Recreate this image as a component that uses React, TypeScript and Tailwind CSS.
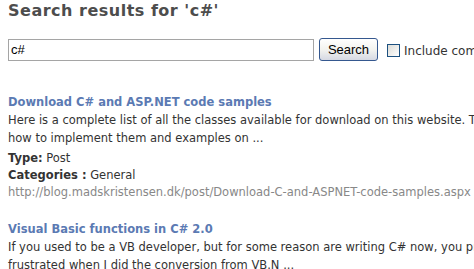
import React from "react";

const font = { fontFamily: '"DejaVu Sans", Verdana, sans-serif' };

export default function App() {
  return (
    <div className="bg-white w-[474px] h-[269px] overflow-hidden px-2 text-[#333]" style={font}>
      <h1 className="text-[16px] font-bold text-[#4d4d4d] leading-[20px] pt-[1px] tracking-[0.5px] whitespace-nowrap">
        Search results for 'c#'
      </h1>
      <div className="flex items-center mt-[17px] whitespace-nowrap">
        <div className="shrink-0 w-[306px] h-[22px] border border-[#a5a5a5] flex items-center px-[2px] text-[13px] text-black font-['Liberation_Sans',Arial,sans-serif]">
          c#
        </div>
        <button className="shrink-0 ml-[5px] w-[59px] h-[23px] rounded-[3px] border border-[#35588f] bg-gradient-to-b from-[#ffffff] via-[#f3f3ef] to-[#d6d9e3] text-[13px] text-black font-['Liberation_Sans',Arial,sans-serif] leading-none flex items-center justify-center">
          Search
        </button>
        <span className="shrink-0 ml-[9px] w-[13px] h-[13px] border border-[#1c5180] bg-gradient-to-br from-[#dcdcd7] to-[#ffffff] mt-[2px]" />
        <span className="shrink-0 ml-[4px] text-[12px] mt-[2px] text-[#333]">Include comments</span>
      </div>

      <div className="mt-[32px] text-[11.5px] leading-[18px] whitespace-nowrap">
        <div className="font-bold text-[#5b7ab3] leading-[18px]">Download C# and ASP.NET code samples</div>
        <div>Here is a complete list of all the classes available for download on this website. The list contains</div>
        <div>how to implement them and examples on ...</div>
        <div className="mt-[3px] leading-[17px]"><span className="font-bold">Type:</span> Post</div>
        <div className="leading-[17px]"><span className="font-bold">Categories :</span> General</div>
        <div className="leading-[17px] text-[#888]">http://blog.madskristensen.dk/post/Download-C-and-ASPNET-code-samples.aspx</div>

        <div className="mt-[19px] font-bold text-[#5b7ab3]">Visual Basic functions in C# 2.0</div>
        <div>If you used to be a VB developer, but for some reason are writing C# now, you probably</div>
        <div>frustrated when I did the conversion from VB.N ...</div>
      </div>
    </div>
  );
}
